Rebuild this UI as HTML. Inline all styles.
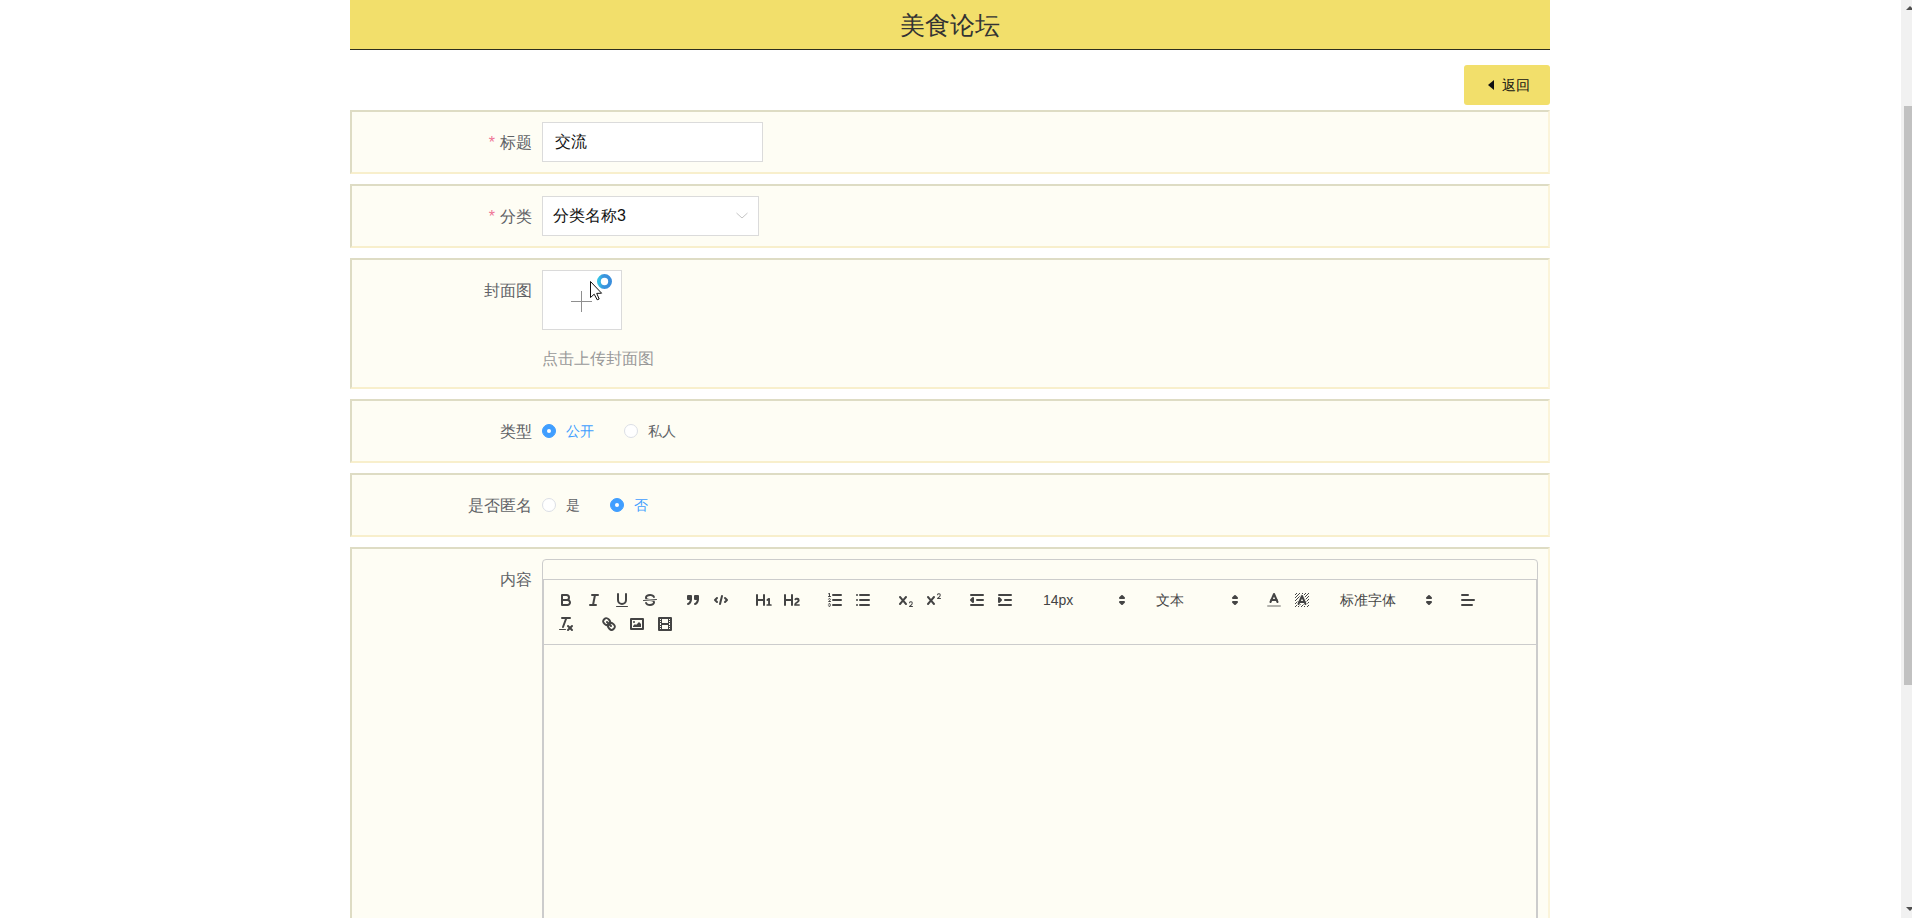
<!DOCTYPE html>
<html>
<head>
<meta charset="utf-8">
<style>
html,body{margin:0;padding:0;}
body{width:1912px;height:918px;overflow:hidden;background:#fff;position:relative;font-family:"Liberation Sans",sans-serif;}
.abs{position:absolute;}
.ic{position:absolute;width:18px;height:18px;overflow:visible;}
.ic .s{fill:none;stroke:#444;stroke-linecap:round;stroke-linejoin:round;stroke-width:2;}
.ic .t{stroke-width:1;}
.ic .f{fill:#444;}
.ic .e{fill-rule:evenodd;}
.pk{position:absolute;font-size:14px;font-weight:500;color:#444;line-height:22px;white-space:nowrap;}
#header{left:350px;top:0;width:1200px;height:49px;background:#f2df6b;border-bottom:1px solid #2e2e1e;text-align:center;line-height:49px;font-size:25px;color:#333;}
#back{left:1464px;top:65px;width:86px;height:40px;background:#f2df6b;border-radius:3px;font-size:14px;color:#111;line-height:41px;}
#back .tri{position:absolute;left:24px;top:15px;width:0;height:0;border-top:5px solid transparent;border-bottom:5px solid transparent;border-right:6px solid #111;}
#back .txt{position:absolute;left:38px;top:0;}
.row{position:absolute;left:350px;width:1196px;background:#fefdf4;border-style:solid;border-width:2px;border-color:#dedcc4 #fbf4da #f8efcc #dedcc4;}
.lbl{position:absolute;right:1016px;font-size:16px;color:#606266;white-space:nowrap;}
.req{color:#ef7596;margin-right:5px;font-size:16px;}
.inp{position:absolute;left:190px;background:#fff;border:1px solid #dbdbdb;box-sizing:border-box;height:40px;font-size:16px;color:#111;line-height:38px;padding-left:12px;}
.radio{position:absolute;top:0;width:14px;height:14px;box-sizing:border-box;border-radius:50%;}
.radio.on{background:#409eff;border:1px solid #409eff;}
.radio.on::after{content:"";position:absolute;left:4px;top:4px;width:4px;height:4px;border-radius:50%;background:#fff;}
.radio.off{background:#fff;border:1px solid #dcdfe6;}
.rtxt{position:absolute;font-size:14px;color:#606266;line-height:14px;top:0;white-space:nowrap;}
.rtxt.on{color:#409eff;}
#sb{left:1901px;top:0;width:11px;height:918px;background:#f1f1f1;}
#thumb{left:1904px;top:106px;width:8px;height:579px;background:#c1c1c1;}
</style>
</head>
<body>
<div id="header" class="abs"><span style="position:relative;top:1px;">美食论坛</span></div>
<div id="back" class="abs"><span class="tri"></span><span class="txt">返回</span></div>

<!-- row 1 -->
<div class="row" style="top:110px;height:60px;">
  <div class="lbl" style="top:11px;line-height:40px;"><span class="req">*</span>标题</div>
  <div class="inp" style="top:10px;width:221px;">交流</div>
</div>
<!-- row 2 -->
<div class="row" style="top:184px;height:60px;">
  <div class="lbl" style="top:11px;line-height:40px;"><span class="req">*</span>分类</div>
  <div class="inp" style="top:10px;width:217px;padding-left:10px;">分类名称3
    <svg style="position:absolute;left:193px;top:15px" width="12" height="8" viewBox="0 0 12 8"><polyline points="0.5,1 6,6 11.5,1" fill="none" stroke="#c4c4c4" stroke-width="1"/></svg>
  </div>
</div>
<!-- row 3 -->
<div class="row" style="top:258px;height:127px;">
  <div class="lbl" style="top:11px;line-height:40px;">封面图</div>
  <div class="abs" style="left:190px;top:10px;width:80px;height:60px;box-sizing:border-box;border:1px solid #dadada;background:#fff;">
    <div class="abs" style="left:28px;top:30px;width:21px;height:1px;background:#8f8f8f;"></div>
    <div class="abs" style="left:38px;top:20px;width:1px;height:21px;background:#8f8f8f;"></div>
  </div>
  <div class="abs" style="left:190px;top:87px;font-size:16px;color:#999;line-height:24px;white-space:nowrap;">点击上传封面图</div>
</div>
<!-- row 4 -->
<div class="row" style="top:399px;height:60px;">
  <div class="lbl" style="top:11px;line-height:40px;">类型</div>
  <div class="abs" style="left:190px;top:23px;width:300px;height:14px;">
    <span class="radio on" style="left:0"></span><span class="rtxt on" style="left:24px">公开</span>
    <span class="radio off" style="left:82px"></span><span class="rtxt" style="left:106px">私人</span>
  </div>
</div>
<!-- row 5 -->
<div class="row" style="top:473px;height:60px;">
  <div class="lbl" style="top:11px;line-height:40px;">是否匿名</div>
  <div class="abs" style="left:190px;top:23px;width:300px;height:14px;">
    <span class="radio off" style="left:0"></span><span class="rtxt" style="left:24px">是</span>
    <span class="radio on" style="left:68px"></span><span class="rtxt on" style="left:92px">否</span>
  </div>
</div>
<!-- row 6 -->
<div class="row" style="top:547px;height:400px;">
  <div class="lbl" style="top:11px;line-height:40px;">内容</div>
</div>

<!-- editor -->
<div class="abs" style="left:542px;top:559px;width:996px;height:400px;box-sizing:border-box;border:1px solid #ccc;border-radius:4px;"></div>
<div class="abs" style="left:543px;top:579px;width:994px;height:66px;box-sizing:border-box;border:1px solid #ccc;"></div>
<div class="abs" style="left:543px;top:644px;width:994px;height:300px;box-sizing:border-box;border:1px solid #ccc;border-top:0;"></div>
<svg class="ic" style="left:557px;top:591px" viewBox="0 0 18 18"><path class="s" d="M5,4H9.5A2.5,2.5,0,0,1,12,6.5v0A2.5,2.5,0,0,1,9.5,9H5A0,0,0,0,1,5,9V4A0,0,0,0,1,5,4Z"/><path class="s" d="M5,9h5.5A2.5,2.5,0,0,1,13,11.5v0A2.5,2.5,0,0,1,10.5,14H5a0,0,0,0,1,0,0V9A0,0,0,0,1,5,9Z"/></svg>
<svg class="ic" style="left:585px;top:591px" viewBox="0 0 18 18"><line class="s" x1="7" x2="13" y1="4" y2="4"/><line class="s" x1="5" x2="11" y1="14" y2="14"/><line class="s" x1="8" x2="10" y1="14" y2="4"/></svg>
<svg class="ic" style="left:613px;top:591px" viewBox="0 0 18 18"><path class="s" d="M5,3V9a4.012,4.012,0,0,0,4,4H9a4.012,4.012,0,0,0,4-4V3"/><rect class="f" height="1" rx="0.5" ry="0.5" width="12" x="3" y="15"/></svg>
<svg class="ic" style="left:641px;top:591px" viewBox="0 0 18 18"><line class="s t" x1="15.5" x2="2.5" y1="8.5" y2="9.5"/><path class="f" d="M9.007,8C6.542,7.791,6,7.519,6,6.5,6,5.792,7.283,5,9,5c1.571,0,2.765.679,2.969,1.309a1,1,0,0,0,1.9-.617C13.356,4.106,11.354,3,9,3,6.2,3,4,4.538,4,6.5a3.2,3.2,0,0,0,.5,1.843Z"/><path class="f" d="M8.984,10C11.457,10.208,12,10.479,12,11.5c0,0.708-1.283,1.5-3,1.5-1.571,0-2.765-.679-2.969-1.309a1,1,0,1,0-1.9.617C4.644,13.894,6.646,15,9,15c2.8,0,5-1.538,5-3.5a3.2,3.2,0,0,0-.5-1.843Z"/></svg>
<svg class="ic" style="left:684px;top:591px" viewBox="0 0 18 18"><rect class="f s" height="3" width="3" x="4" y="5"/><rect class="f s" height="3" width="3" x="11" y="5"/><path class="e f s" d="M7,8c0,4.031-3,5-3,5"/><path class="e f s" d="M14,8c0,4.031-3,5-3,5"/></svg>
<svg class="ic" style="left:712px;top:591px" viewBox="0 0 18 18"><polyline class="e s" points="5 7 3 9 5 11"/><polyline class="e s" points="13 7 15 9 13 11"/><line class="s" x1="10" x2="8" y1="5" y2="13"/></svg>
<svg class="ic" style="left:755px;top:591px" viewBox="0 0 18 18"><path class="f" d="M10,4V14a1,1,0,0,1-2,0V10H3v4a1,1,0,0,1-2,0V4A1,1,0,0,1,3,4V8H8V4a1,1,0,0,1,2,0Zm6.06787,9.209H14.98975V7.59863a.54085.54085,0,0,0-.605-.60547h-.62744a1.01119,1.01119,0,0,0-.748.29688L11.645,8.56641a.5435.5435,0,0,0-.022.8584l.28613.30762a.53861.53861,0,0,0,.84717.0332l.09912-.08789a1.2137,1.2137,0,0,0,.2417-.35254h.02246s-.01123.30859-.01123.60547V13.209H12.041a.54085.54085,0,0,0-.605.60547v.43945a.54085.54085,0,0,0,.605.60547h4.02686a.54085.54085,0,0,0,.605-.60547v-.43945A.54085.54085,0,0,0,16.06787,13.209Z"/></svg>
<svg class="ic" style="left:783px;top:591px" viewBox="0 0 18 18"><path class="f" d="M16.73975,13.81445v.43945a.54085.54085,0,0,1-.605.60547H11.855a.58392.58392,0,0,1-.64893-.60547V14.0127c0-2.90527,3.39941-3.42187,3.39941-4.55469a.77675.77675,0,0,0-.84717-.78125,1.17684,1.17684,0,0,0-.83594.38477c-.2749.26367-.561.374-.85791.13184l-.4292-.34082c-.30811-.24219-.38525-.51758-.1543-.81445a2.97155,2.97155,0,0,1,2.45361-1.17676,2.45393,2.45393,0,0,1,2.68408,2.40918c0,2.45312-3.1792,2.92676-3.27832,3.93848h2.79443A.54085.54085,0,0,1,16.73975,13.81445ZM9,3A.99974.99974,0,0,0,8,4V8H3V4A1,1,0,0,0,1,4V14a1,1,0,0,0,2,0V10H8v4a1,1,0,0,0,2,0V4A.99974.99974,0,0,0,9,3Z"/></svg>
<svg class="ic" style="left:826px;top:591px" viewBox="0 0 18 18"><line class="s" x1="7" x2="15" y1="4" y2="4"/><line class="s" x1="7" x2="15" y1="9" y2="9"/><line class="s" x1="7" x2="15" y1="14" y2="14"/><line class="s t" x1="2.5" x2="4.5" y1="5.5" y2="5.5"/><path class="f" d="M3.5,6A0.5,0.5,0,0,1,3,5.5V3.085l-0.276.138A0.5,0.5,0,0,1,2.053,3c-0.124-.247-0.023-0.324.224-0.447l1-.5A0.5,0.5,0,0,1,4,2.5v3A0.5,0.5,0,0,1,3.5,6Z"/><path class="s t" d="M4.5,10.5h-2c0-.234,1.85-1.076,1.85-2.234A0.959,0.959,0,0,0,2.5,8.156"/><path class="s t" d="M2.5,14.846a0.959,0.959,0,0,0,1.85-.109A0.7,0.7,0,0,0,3.75,14a0.688,0.688,0,0,0,.6-0.736,0.959,0.959,0,0,0-1.85-.109"/></svg>
<svg class="ic" style="left:854px;top:591px" viewBox="0 0 18 18"><line class="s" x1="6" x2="15" y1="4" y2="4"/><line class="s" x1="6" x2="15" y1="9" y2="9"/><line class="s" x1="6" x2="15" y1="14" y2="14"/><line class="s" x1="3" x2="3" y1="4" y2="4"/><line class="s" x1="3" x2="3" y1="9" y2="9"/><line class="s" x1="3" x2="3" y1="14" y2="14"/></svg>
<svg class="ic" style="left:897px;top:591px" viewBox="0 0 18 18"><path class="f" d="M15.5,15H13.861a3.858,3.858,0,0,0,1.914-2.975,1.8,1.8,0,0,0-1.6-1.751A1.921,1.921,0,0,0,12.021,11.7a0.50013,0.50013,0,1,0,.957.291h0a0.914,0.914,0,0,1,1.053-.725,0.81,0.81,0,0,1,.744.762c0,1.076-1.16971,1.86982-1.93971,2.43082A1.45639,1.45639,0,0,0,12,15.5a0.5,0.5,0,0,0,.5.5h3A0.5,0.5,0,0,0,15.5,15Z"/><path class="f" d="M9.65,5.241a1,1,0,0,0-1.409.108L6,7.964,3.759,5.349A1,1,0,0,0,2.192,6.59178Q2.21541,6.6213,2.241,6.649L4.684,9.5,2.241,12.35A1,1,0,0,0,3.71,13.70722q0.02557-.02768.049-0.05722L6,11.036,8.241,13.65a1,1,0,1,0,1.567-1.24277Q9.78459,12.3777,9.759,12.35L7.316,9.5,9.759,6.651A1,1,0,0,0,9.65,5.241Z"/></svg>
<svg class="ic" style="left:925px;top:591px" viewBox="0 0 18 18"><path class="f" d="M15.5,7H13.861a4.015,4.015,0,0,0,1.914-2.975,1.8,1.8,0,0,0-1.6-1.751A1.922,1.922,0,0,0,12.021,3.7a0.5,0.5,0,1,0,.957.291,0.917,0.917,0,0,1,1.053-.725,0.81,0.81,0,0,1,.744.762c0,1.077-1.164,1.925-1.934,2.486A1.423,1.423,0,0,0,12,7.5a0.5,0.5,0,0,0,.5.5h3A0.5,0.5,0,0,0,15.5,7Z"/><path class="f" d="M9.651,5.241a1,1,0,0,0-1.41.108L6,7.964,3.759,5.349a1,1,0,1,0-1.519,1.3L4.683,9.5,2.241,12.35a1,1,0,1,0,1.519,1.3L6,11.036,8.241,13.65a1,1,0,0,0,1.519-1.3L7.317,9.5,9.759,6.651A1,1,0,0,0,9.651,5.241Z"/></svg>
<svg class="ic" style="left:968px;top:591px" viewBox="0 0 18 18"><line class="s" x1="3" x2="15" y1="14" y2="14"/><line class="s" x1="3" x2="15" y1="4" y2="4"/><line class="s" x1="9" x2="15" y1="9" y2="9"/><polyline class="f s" points="5 7 5 11 3 9 5 7"/></svg>
<svg class="ic" style="left:996px;top:591px" viewBox="0 0 18 18"><line class="s" x1="3" x2="15" y1="14" y2="14"/><line class="s" x1="3" x2="15" y1="4" y2="4"/><line class="s" x1="9" x2="15" y1="9" y2="9"/><polyline class="f s" points="3 7 3 11 5 9 3 7"/></svg>
<svg class="ic" style="left:1265px;top:591px" viewBox="0 0 18 18"><line class="s" style="opacity:.4" x1="3" x2="15" y1="15" y2="15"/><polyline class="s" points="5.5 11 9 3 12.5 11"/><line class="s" x1="11.63" x2="6.38" y1="9" y2="9"/></svg>
<svg class="ic" style="left:1293px;top:591px" viewBox="0 0 18 18"><g class="f"><polygon points="6 6.868 6 6 5 6 5 7 5.942 7 6 6.868"/><rect height="1" width="1" x="4" y="4"/><polygon points="6.817 5 6 5 6 6 6.38 6 6.817 5"/><rect height="1" width="1" x="2" y="6"/><rect height="1" width="1" x="3" y="5"/><rect height="1" width="1" x="4" y="7"/><polygon points="4 11.439 4 11 3 11 3 12 3.755 12 4 11.439"/><rect height="1" width="1" x="2" y="12"/><rect height="1" width="1" x="2" y="9"/><rect height="1" width="1" x="2" y="15"/><polygon points="4.63 10 4 10 4 11 4.192 11 4.63 10"/><rect height="1" width="1" x="3" y="8"/><path d="M10.832,4.2L11,4.582V4H10.708A1.948,1.948,0,0,1,10.832,4.2Z"/><path d="M7,4.582L7.168,4.2A1.929,1.929,0,0,1,7.292,4H7V4.582Z"/><path d="M8,13H7.683l-0.351.8a1.933,1.933,0,0,1-.124.2H8V13Z"/><rect height="1" width="1" x="12" y="2"/><rect height="1" width="1" x="11" y="3"/><path d="M9,3H8V3.282A1.985,1.985,0,0,1,9,3Z"/><rect height="1" width="1" x="2" y="3"/><rect height="1" width="1" x="6" y="2"/><rect height="1" width="1" x="3" y="2"/><rect height="1" width="1" x="5" y="3"/><rect height="1" width="1" x="9" y="2"/><rect height="1" width="1" x="15" y="14"/><polygon points="13.447 10.174 13.469 10.225 13.472 10.232 13.808 11 14 11 14 10 13.37 10 13.447 10.174"/><rect height="1" width="1" x="13" y="7"/><rect height="1" width="1" x="15" y="5"/><rect height="1" width="1" x="14" y="6"/><rect height="1" width="1" x="15" y="8"/><rect height="1" width="1" x="14" y="9"/><path d="M3.775,14H3v1H4V14.314A1.97,1.97,0,0,1,3.775,14Z"/><rect height="1" width="1" x="14" y="3"/><polygon points="12 6.868 12 6 11.62 6 12 6.868"/><rect height="1" width="1" x="15" y="2"/><rect height="1" width="1" x="12" y="5"/><rect height="1" width="1" x="13" y="4"/><polygon points="12.933 9 13 9 13 8 12.495 8 12.933 9"/><rect height="1" width="1" x="9" y="14"/><rect height="1" width="1" x="8" y="15"/><path d="M6,14.926V15H7V14.316A1.993,1.993,0,0,1,6,14.926Z"/><rect height="1" width="1" x="5" y="15"/><path d="M10.668,13.8L10.317,13H10v1h0.792A1.947,1.947,0,0,1,10.668,13.8Z"/><rect height="1" width="1" x="11" y="15"/><path d="M14.332,12.2a1.99,1.99,0,0,1,.166.8H15V12H14.245Z"/><rect height="1" width="1" x="14" y="15"/><rect height="1" width="1" x="15" y="11"/></g><polyline class="s" points="5.5 13 9 5 12.5 13"/><line class="s" x1="11.63" x2="6.38" y1="11" y2="11"/></svg>
<svg class="ic" style="left:1459px;top:591px" viewBox="0 0 18 18"><line class="s" x1="3" x2="15" y1="9" y2="9"/><line class="s" x1="3" x2="13" y1="14" y2="14"/><line class="s" x1="3" x2="9" y1="4" y2="4"/></svg>
<svg class="ic" style="left:557px;top:615px" viewBox="0 0 18 18"><line class="s" x1="5" x2="13" y1="3" y2="3"/><line class="s" x1="6" x2="9.35" y1="12" y2="3"/><line class="s" x1="11" x2="15" y1="11" y2="15"/><line class="s" x1="15" x2="11" y1="11" y2="15"/><rect class="f" height="1" rx="0.5" ry="0.5" width="7" x="2" y="14"/></svg>
<svg class="ic" style="left:600px;top:615px" viewBox="0 0 18 18"><line class="s" x1="7" x2="11" y1="7" y2="11"/><path class="e s" d="M8.9,4.577a3.476,3.476,0,0,1,.36,4.679A3.476,3.476,0,0,1,4.577,8.9C3.185,7.5,2.035,6.4,4.217,4.217S7.5,3.185,8.9,4.577Z"/><path class="e s" d="M13.423,9.1a3.476,3.476,0,0,0-4.679-.36,3.476,3.476,0,0,0,.36,4.679c1.392,1.392,2.5,2.542,4.679.36S14.815,10.5,13.423,9.1Z"/></svg>
<svg class="ic" style="left:628px;top:615px" viewBox="0 0 18 18"><rect class="s" height="10" width="12" x="3" y="4"/><circle class="f" cx="6" cy="7" r="1"/><polyline class="e f" points="5 12 5 11 7 9 8 10 11 7 13 9 13 12 5 12"/></svg>
<svg class="ic" style="left:656px;top:615px" viewBox="0 0 18 18"><rect class="s" height="12" width="12" x="3" y="3"/><rect class="f" height="12" width="1" x="5" y="3"/><rect class="f" height="12" width="1" x="12" y="3"/><rect class="f" height="2" width="8" x="5" y="8"/><rect class="f" height="1" width="3" x="3" y="5"/><rect class="f" height="1" width="3" x="3" y="7"/><rect class="f" height="1" width="3" x="3" y="10"/><rect class="f" height="1" width="3" x="3" y="12"/><rect class="f" height="1" width="3" x="12" y="5"/><rect class="f" height="1" width="3" x="12" y="7"/><rect class="f" height="1" width="3" x="12" y="10"/><rect class="f" height="1" width="3" x="12" y="12"/></svg>
<div class="pk" style="left:1043px;top:589px">14px</div>
<svg class="ic" style="left:1113px;top:591px" viewBox="0 0 18 18"><polygon class="s" points="7 11 9 13 11 11 7 11"/><polygon class="s" points="7 7 9 5 11 7 7 7"/></svg>
<div class="pk" style="left:1156px;top:589px">文本</div>
<svg class="ic" style="left:1226px;top:591px" viewBox="0 0 18 18"><polygon class="s" points="7 11 9 13 11 11 7 11"/><polygon class="s" points="7 7 9 5 11 7 7 7"/></svg>
<div class="pk" style="left:1340px;top:589px">标准字体</div>
<svg class="ic" style="left:1420px;top:591px" viewBox="0 0 18 18"><polygon class="s" points="7 11 9 13 11 11 7 11"/><polygon class="s" points="7 7 9 5 11 7 7 7"/></svg>
<svg class="abs" style="left:585px;top:272px;overflow:visible" width="30" height="32" viewBox="0 0 30 32">
<defs><linearGradient id="rg" x1="0" y1="0" x2="1" y2="0"><stop offset="0" stop-color="#33c2e6"/><stop offset="0.35" stop-color="#3a96dd"/><stop offset="1" stop-color="#3a8edc"/></linearGradient></defs>
<circle cx="19.5" cy="9.5" r="5.6" fill="none" stroke="url(#rg)" stroke-width="3.8"/>
<path d="M5.5,9.5 L5.5,25.5 L9.2,22.2 L12.2,27.8 L14.2,27 L11.7,21.4 L16.6,21.2 Z" fill="#fff" stroke="#111" stroke-width="1" stroke-linejoin="miter"/>
</svg>
<div id="sb" class="abs"></div>
<div id="thumb" class="abs"></div>
<div class="abs" style="left:1906px;top:6px;width:0;height:0;border-left:4px solid transparent;border-right:4px solid transparent;border-bottom:4px solid #505050;"></div>
<div class="abs" style="left:1906px;top:907px;width:0;height:0;border-left:4px solid transparent;border-right:4px solid transparent;border-top:4px solid #505050;"></div>

</body>
</html>
